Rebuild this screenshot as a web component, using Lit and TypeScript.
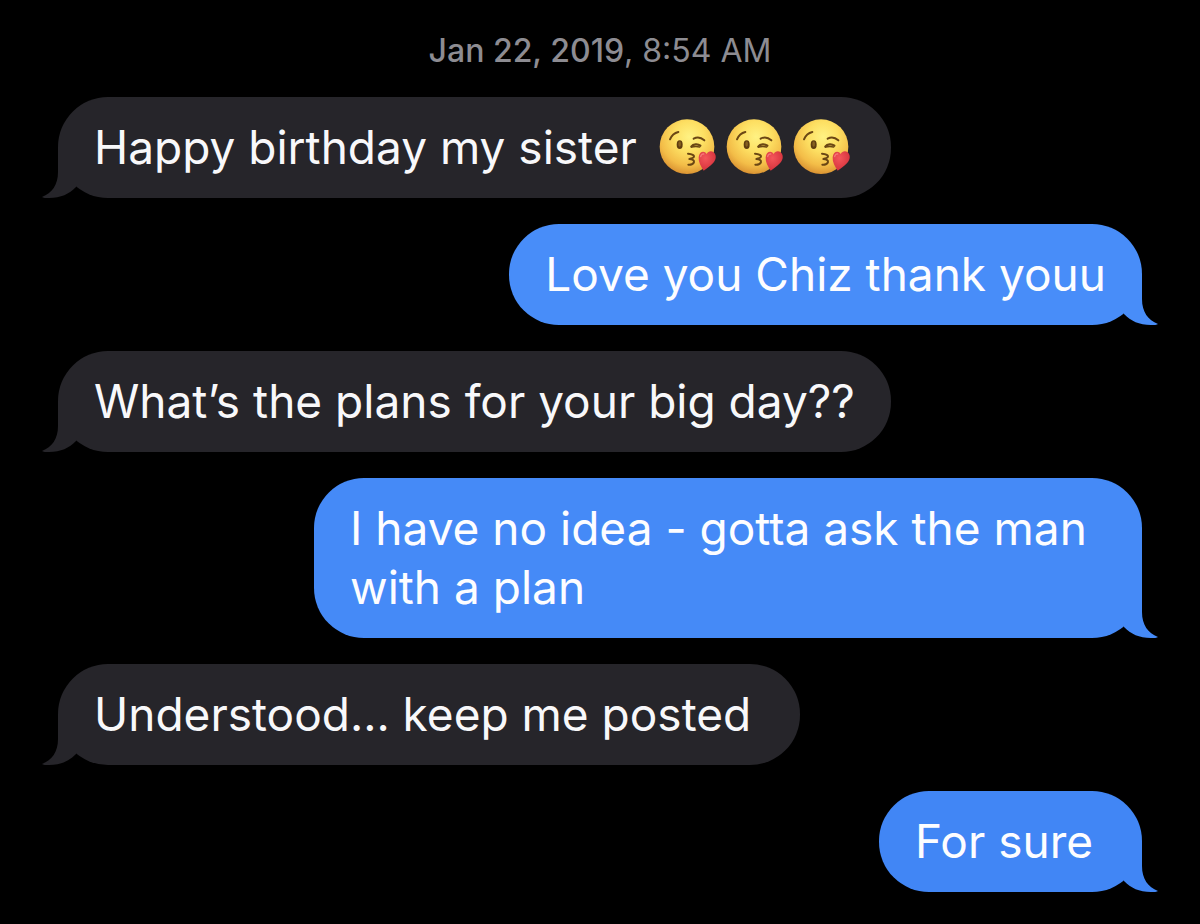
import { LitElement, html, css, svg, nothing } from "lit";
import { customElement, property } from "lit/decorators.js";

interface Message {
  from: "them" | "me";
  text: string;
  kisses?: number;
  tone?: string;
}

const messages: Message[] = [
  { from: "them", text: "Happy birthday my sister ", kisses: 3 },
  { from: "me", text: "Love you Chiz thank youu", tone: "light" },
  { from: "them", text: "What’s the plans for your big day??" },
  { from: "me", text: "I have no idea - gotta ask the man with a plan", tone: "mid" },
  { from: "them", text: "Understood... keep me posted\u00a0" },
  { from: "me", text: "For sure\u00a0", tone: "deep" },
];

@customElement("kiss-emoji")
export class KissEmoji extends LitElement {
  static styles = css`
    :host {
      display: inline-block;
      width: 67px;
      height: 59px;
      vertical-align: top;
    }
    .face {
      display: block;
      width: 67px;
      height: 60px;
    }
  `;

  render() {
    return html`<svg class="face" viewBox="0 18 201 180" role="img" aria-label="Face blowing a kiss">
      ${svg`
      <defs>
        <radialGradient id="skin" cx="0.54" cy="0.32" r="0.7">
          <stop offset="0" stop-color="#fff283"/>
          <stop offset="0.4" stop-color="#fddf62"/>
          <stop offset="0.75" stop-color="#f3bd48"/>
          <stop offset="1" stop-color="#d88f30"/>
        </radialGradient>
        <radialGradient id="heart" cx="0.4" cy="0.35" r="0.7">
          <stop offset="0" stop-color="#f4565a"/>
          <stop offset="1" stop-color="#d3303b"/>
        </radialGradient>
      </defs>
      <circle cx="99" cy="104" r="82" fill="url(#skin)"/>
      <g fill="none" stroke="#6b4714" stroke-linecap="round" stroke-linejoin="round">
        <path stroke-width="6" d="M48 82C53 70 61 63 73 60"/>
        <path stroke-width="6" d="M119 80C130 74 142 77 151 85"/>
        <path stroke-width="7" d="M112 104C118 96 131 95 139 101"/>
        <path stroke-width="4" d="M113 105C121 103 130 103 137 105"/>
        <path stroke-width="6" d="M102 125C111 126 120 128 120 133C120 138 111 140 106 141C114 142 121 144 120 150C119 156 110 159 103 158"/>
      </g>
      <ellipse cx="77" cy="98" rx="9" ry="13" fill="#5f3d10"/>
      <ellipse cx="77" cy="96" rx="4" ry="8" fill="#876020"/>
      <path fill="url(#heart)" d="M149 176C140 162 133 150 134 136C136 118 151 115 158 126C164 113 182 116 185 131C188 150 168 161 149 176Z"/>
      <path fill="none" stroke="#ff9a98" stroke-width="4" stroke-linecap="round" opacity="0.6" d="M140 134C141 128 145 125 149 126"/>`}
    </svg>`;
  }
}

@customElement("chat-bubble")
export class ChatBubble extends LitElement {
  @property({ attribute: false }) message!: Message;

  static styles = css`
    :host {
      display: flex;
    }
    .bubble {
      position: relative;
      box-sizing: border-box;
      max-width: 860px;
      margin: 0;
      padding: 21px 36px;
      border-radius: 50px;
      font-size: 46px;
      line-height: 59px;
      color: #fdfdff;
      overflow-wrap: break-word;
    }
    .them {
      background: #26252a;
      color: #f8f8fa;
      margin-right: auto;
    }
    .me {
      max-width: 828px;
      margin-left: auto;
    }
    .light {
      background: #488df9;
    }
    .mid {
      background: #458af7;
    }
    .deep {
      background: #4186f5;
    }
    .kisses {
      padding-left: 4px;
      white-space: nowrap;
    }
    .tail {
      position: absolute;
      bottom: 0;
      right: -16px;
      width: 36px;
      height: 50px;
    }
    .them .tail {
      right: auto;
      left: -16px;
      transform: scaleX(-1);
    }
    .tail path {
      fill: #26252a;
    }
    .light .tail path {
      fill: #488df9;
    }
    .mid .tail path {
      fill: #458af7;
    }
    .deep .tail path {
      fill: #4186f5;
    }
  `;

  render() {
    const m = this.message;
    return html`<p class="bubble ${m.from} ${m.tone ?? ""}">${m.text}${m.kisses
        ? html`<span class="kisses">${Array.from({ length: m.kisses }, () => html`<kiss-emoji></kiss-emoji>`)}</span>`
        : nothing}<svg class="tail" viewBox="0 0 36 50" aria-hidden="true">
        <path d="M20 0V24C20 37 26 45 36 49C35 50 32 50 29 50C17 50 9 46 2 39V0Z" />
      </svg></p>`;
  }
}

@customElement("app-root")
export class AppRoot extends LitElement {
  static styles = css`
    :host {
      display: block;
      min-height: 100vh;
      box-sizing: border-box;
      padding: 31px 58px;
      background: #000;
      font-family: Inter, "Noto Sans", sans-serif;
    }
    .stamp {
      display: block;
      margin-bottom: 26px;
      font-size: 32px;
      line-height: 40px;
      text-align: center;
      color: #8d8c92;
    }
    .date {
      font-weight: 500;
    }
    .thread {
      display: flex;
      flex-direction: column;
      gap: 26px;
    }
  `;

  render() {
    return html`
      <time class="stamp" datetime="2019-01-22T08:54"><span class="date">Jan 22, 2019</span>, 8:54 AM</time>
      <main class="thread">
        ${messages.map((m) => html`<chat-bubble .message=${m}></chat-bubble>`)}
      </main>
    `;
  }
}
